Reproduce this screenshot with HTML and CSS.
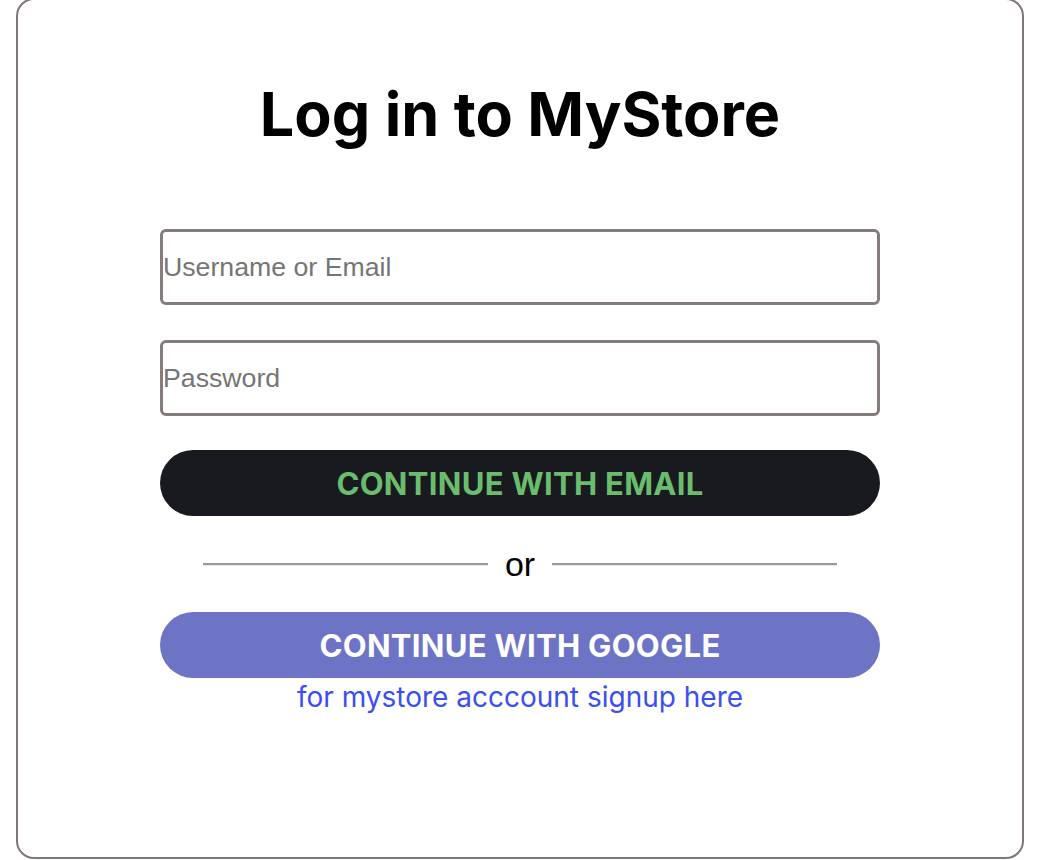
FILE: index.html
```html
<!DOCTYPE html>
<html lang="en">
<head>
<meta charset="utf-8">
<title>Log in to MyStore</title>
<link rel="stylesheet" href="styles.css">
</head>
<body>
<div class="card">
  <h1 class="title">Log in to MyStore</h1>
  <form class="form">
    <input class="field" type="text" placeholder="Username or Email">
    <input class="field field-gap" type="password" placeholder="Password">
    <button class="btn btn-email" type="button">CONTINUE WITH EMAIL</button>
    <div class="divider">
      <span class="rule"></span>
      <span class="or">or</span>
      <span class="rule"></span>
    </div>
    <button class="btn btn-google" type="button">CONTINUE WITH GOOGLE</button>
    <a class="signup" href="#">for mystore acccount signup here</a>
  </form>
</div>
</body>
</html>
```
FILE: styles.css
```css
html, body {
  margin: 0;
  padding: 0;
  background: #ffffff;
  overflow: hidden;
}

.card {
  box-sizing: border-box;
  margin: -2px 16px 0 16px;
  height: 861px;
  border: 2px solid #807877;
  border-radius: 18px;
  padding-top: 78px;
  display: flex;
  flex-direction: column;
  align-items: center;
}

.title {
  margin: 0;
  font-family: Inter, "Liberation Sans", sans-serif;
  font-weight: 700;
  font-size: 61px;
  line-height: 73px;
  color: #000000;
  letter-spacing: 0;
}

.form {
  margin-top: 78px;
  width: 720px;
  display: flex;
  flex-direction: column;
  align-items: stretch;
}

.field {
  box-sizing: border-box;
  height: 76px;
  width: 100%;
  margin: 0;
  border: 3px solid #847d7c;
  border-radius: 6px;
  padding: 0;
  font-family: "Liberation Sans", Arial, sans-serif;
  font-size: 26.7px;
  color: #333;
  background: #fff;
  outline: none;
}

.field::placeholder {
  color: #757575;
}

.field-gap {
  margin-top: 35px;
}

.btn {
  box-sizing: border-box;
  height: 66px;
  width: 100%;
  border: none;
  border-radius: 33px;
  font-family: Inter, "Liberation Sans", sans-serif;
  font-weight: 700;
  font-size: 31px;
  letter-spacing: 0.3px;
  cursor: pointer;
  padding: 0;
}

.btn-email {
  margin-top: 34px;
  background: #191a1f;
  color: #6bbd6e;
}

.btn-google {
  background: #6e74c5;
  color: #ffffff;
}

.divider {
  height: 96px;
  width: 634px;
  align-self: center;
  display: flex;
  align-items: center;
  gap: 17px;
}

.rule {
  flex: 1;
  height: 0;
  border-top: 2px solid #9a9a9a;
  border-bottom: 1px solid #e6e6e6;
  margin-top: 0;
}

.or {
  font-family: "Liberation Sans", Arial, sans-serif;
  font-size: 34px;
  color: #000;
  line-height: 40px;
}

.signup {
  align-self: center;
  margin-top: 1px;
  font-family: Inter, "Liberation Sans", sans-serif;
  font-size: 28px;
  line-height: 36px;
  color: #3b4ef0;
  text-decoration: none;
}
```
